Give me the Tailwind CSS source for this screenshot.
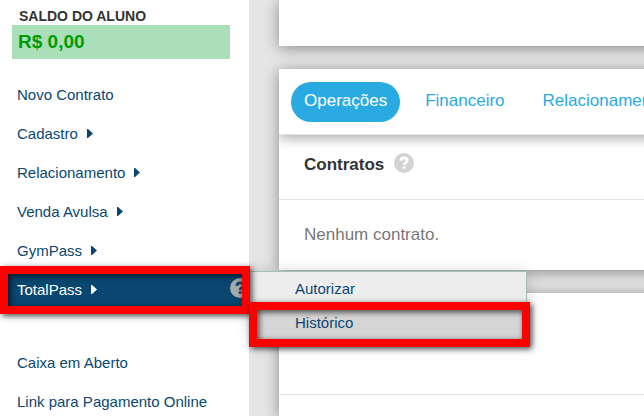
<!DOCTYPE html>
<html lang="pt-BR">
<head>
  <meta charset="UTF-8" />
  <meta name="viewport" content="width=device-width, initial-scale=1" />
  <title>Aluno - Contratos</title>
  <script src="https://cdn.jsdelivr.net/npm/@tailwindcss/browser@4"></script>
</head>
<body class="flex h-screen overflow-hidden bg-[#e5e5e5] font-['Liberation_Sans',Arial,sans-serif]">

  <!-- Sidebar -->
  <aside class="relative z-10 w-[249px] shrink-0 bg-white pt-2">
    <h2 class="pl-[19px] text-sm leading-[17px] font-bold text-[#333]">SALDO DO ALUNO</h2>
    <p class="mr-[19px] ml-3 h-[34px] bg-[#abdfb9] pl-[6px] text-[19px] leading-[34px] font-bold text-[#009b00]">R$ 0,00</p>

    <nav class="mt-4 text-[15px] leading-[39px] text-[#094771]">
      <ul>
        <li><a href="#" class="block px-[17px]">Novo Contrato</a></li>
        <li>
          <a href="#" class="flex items-center gap-[9px] px-[17px]">Cadastro
            <svg class="h-[9px] w-[6px]" viewBox="0 0 6 9" fill="currentColor"><path d="M0 0h1L6 4.5L1 9H0z" /></svg>
          </a>
        </li>
        <li>
          <a href="#" class="flex items-center gap-[9px] px-[17px]">Relacionamento
            <svg class="h-[9px] w-[6px]" viewBox="0 0 6 9" fill="currentColor"><path d="M0 0h1L6 4.5L1 9H0z" /></svg>
          </a>
        </li>
        <li>
          <a href="#" class="flex items-center gap-[9px] px-[17px]">Venda Avulsa
            <svg class="h-[9px] w-[6px]" viewBox="0 0 6 9" fill="currentColor"><path d="M0 0h1L6 4.5L1 9H0z" /></svg>
          </a>
        </li>
        <li>
          <a href="#" class="flex items-center gap-[9px] px-[17px]">GymPass
            <svg class="h-[9px] w-[6px]" viewBox="0 0 6 9" fill="currentColor"><path d="M0 0h1L6 4.5L1 9H0z" /></svg>
          </a>
        </li>
        <li class="relative">
          <a href="#" class="flex items-center gap-[9px] overflow-hidden bg-[#094771] pl-[17px] text-white">TotalPass
            <svg class="h-[9px] w-[6px]" viewBox="0 0 6 9" fill="currentColor"><path d="M0 0h1L6 4.5L1 9H0z" /></svg>
            <svg class="-mt-1 -mr-px ml-auto h-5 w-5" viewBox="0 0 20 20">
              <circle cx="10" cy="10" r="10" fill="#a7a9ac" />
              <path d="M6.7 7.7C7 5.7 8.2 4.9 10 4.9C11.9 4.9 13.2 5.9 13.2 7.5C13.2 9.8 10.1 9.6 10.1 12" fill="none" stroke="#094771" stroke-width="2.6" />
              <path d="M8.7 13.2h2.8v2.6h-2.8z" fill="#094771" />
            </svg>
          </a>

          <!-- Submenu -->
          <ul class="absolute top-px left-full w-[278px] border-t border-r border-[#a9bcbc] bg-[#ededed] leading-[34px] shadow-[0_0_14px_rgba(0,0,0,0.15)]">
            <li><a href="#" class="block pl-[46px]">Autorizar</a></li>
            <li><a href="#" class="block bg-[#d6d6d6] pl-[46px]">Histórico</a></li>
          </ul>

          <!-- Highlights -->
          <div class="absolute -top-1 left-0 h-12 w-[250px] border-8 border-[#f00] shadow-[2px_2px_6px_rgba(0,0,0,0.7),inset_2px_2px_6px_rgba(0,0,0,0.7)]"></div>
          <div class="absolute top-8 left-full h-[45px] w-[281px] border-8 border-[#f00] shadow-[2px_2px_6px_rgba(0,0,0,0.7),inset_2px_2px_6px_rgba(0,0,0,0.7)]"></div>
        </li>
      </ul>
      <ul class="mt-[34px]">
        <li><a href="#" class="block px-[17px]">Caixa em Aberto</a></li>
        <li><a href="#" class="block px-[17px]">Link para Pagamento Online</a></li>
      </ul>
    </nav>
  </aside>

  <!-- Content -->
  <main class="flex min-w-0 flex-1 flex-col gap-[23px] overflow-hidden pl-[30px] text-[17px]">
    <section class="-mr-5 h-[46px] shrink-0 bg-white shadow-[0_2px_14px_rgba(0,0,0,0.4)]"></section>

    <section class="-mr-5 shrink-0 bg-white shadow-[0_2px_14px_rgba(0,0,0,0.4)]">
      <div class="overflow-hidden pb-4">
        <div class="flex border-b border-[#e5e5e5] px-3 pt-[13px] pb-3 leading-[38px] text-[#29abe2] shadow-[0_3px_12px_rgba(0,0,0,0.35)]">
          <button type="button" class="h-10 shrink-0 rounded-full bg-[#29abe2] px-[13px] pb-[2px] text-white">Operações</button>
          <button type="button" class="ml-3 h-10 shrink-0 px-[13px] pb-[2px]">Financeiro</button>
          <button type="button" class="ml-3 h-10 shrink-0 px-[13px] pb-[2px]">Relacionamento</button>
        </div>
      </div>
      <div class="flex gap-[10px] border-b border-[#e5e5e5] px-[25px] pb-5">
        <h3 class="leading-7 font-bold text-[#333]">Contratos</h3>
        <svg class="mt-[2px] h-5 w-5" viewBox="0 0 20 20">
          <circle cx="10" cy="10" r="10" fill="#d3d3d3" />
          <path d="M6.7 7.7C7 5.7 8.2 4.9 10 4.9C11.9 4.9 13.2 5.9 13.2 7.5C13.2 9.8 10.1 9.6 10.1 12" fill="none" stroke="#fff" stroke-width="2.6" />
          <path d="M8.7 13.2h2.8v2.6h-2.8z" fill="#fff" />
        </svg>
      </div>
      <p class="px-[25px] leading-[70px] text-[#777]">Nenhum contrato.</p>
    </section>

    <section class="-mr-5 flex-1 bg-white shadow-[0_2px_14px_rgba(0,0,0,0.4)]">
      <div class="h-[102px] border-b border-[#e5e5e5]"></div>
    </section>
  </main>

</body>
</html>
